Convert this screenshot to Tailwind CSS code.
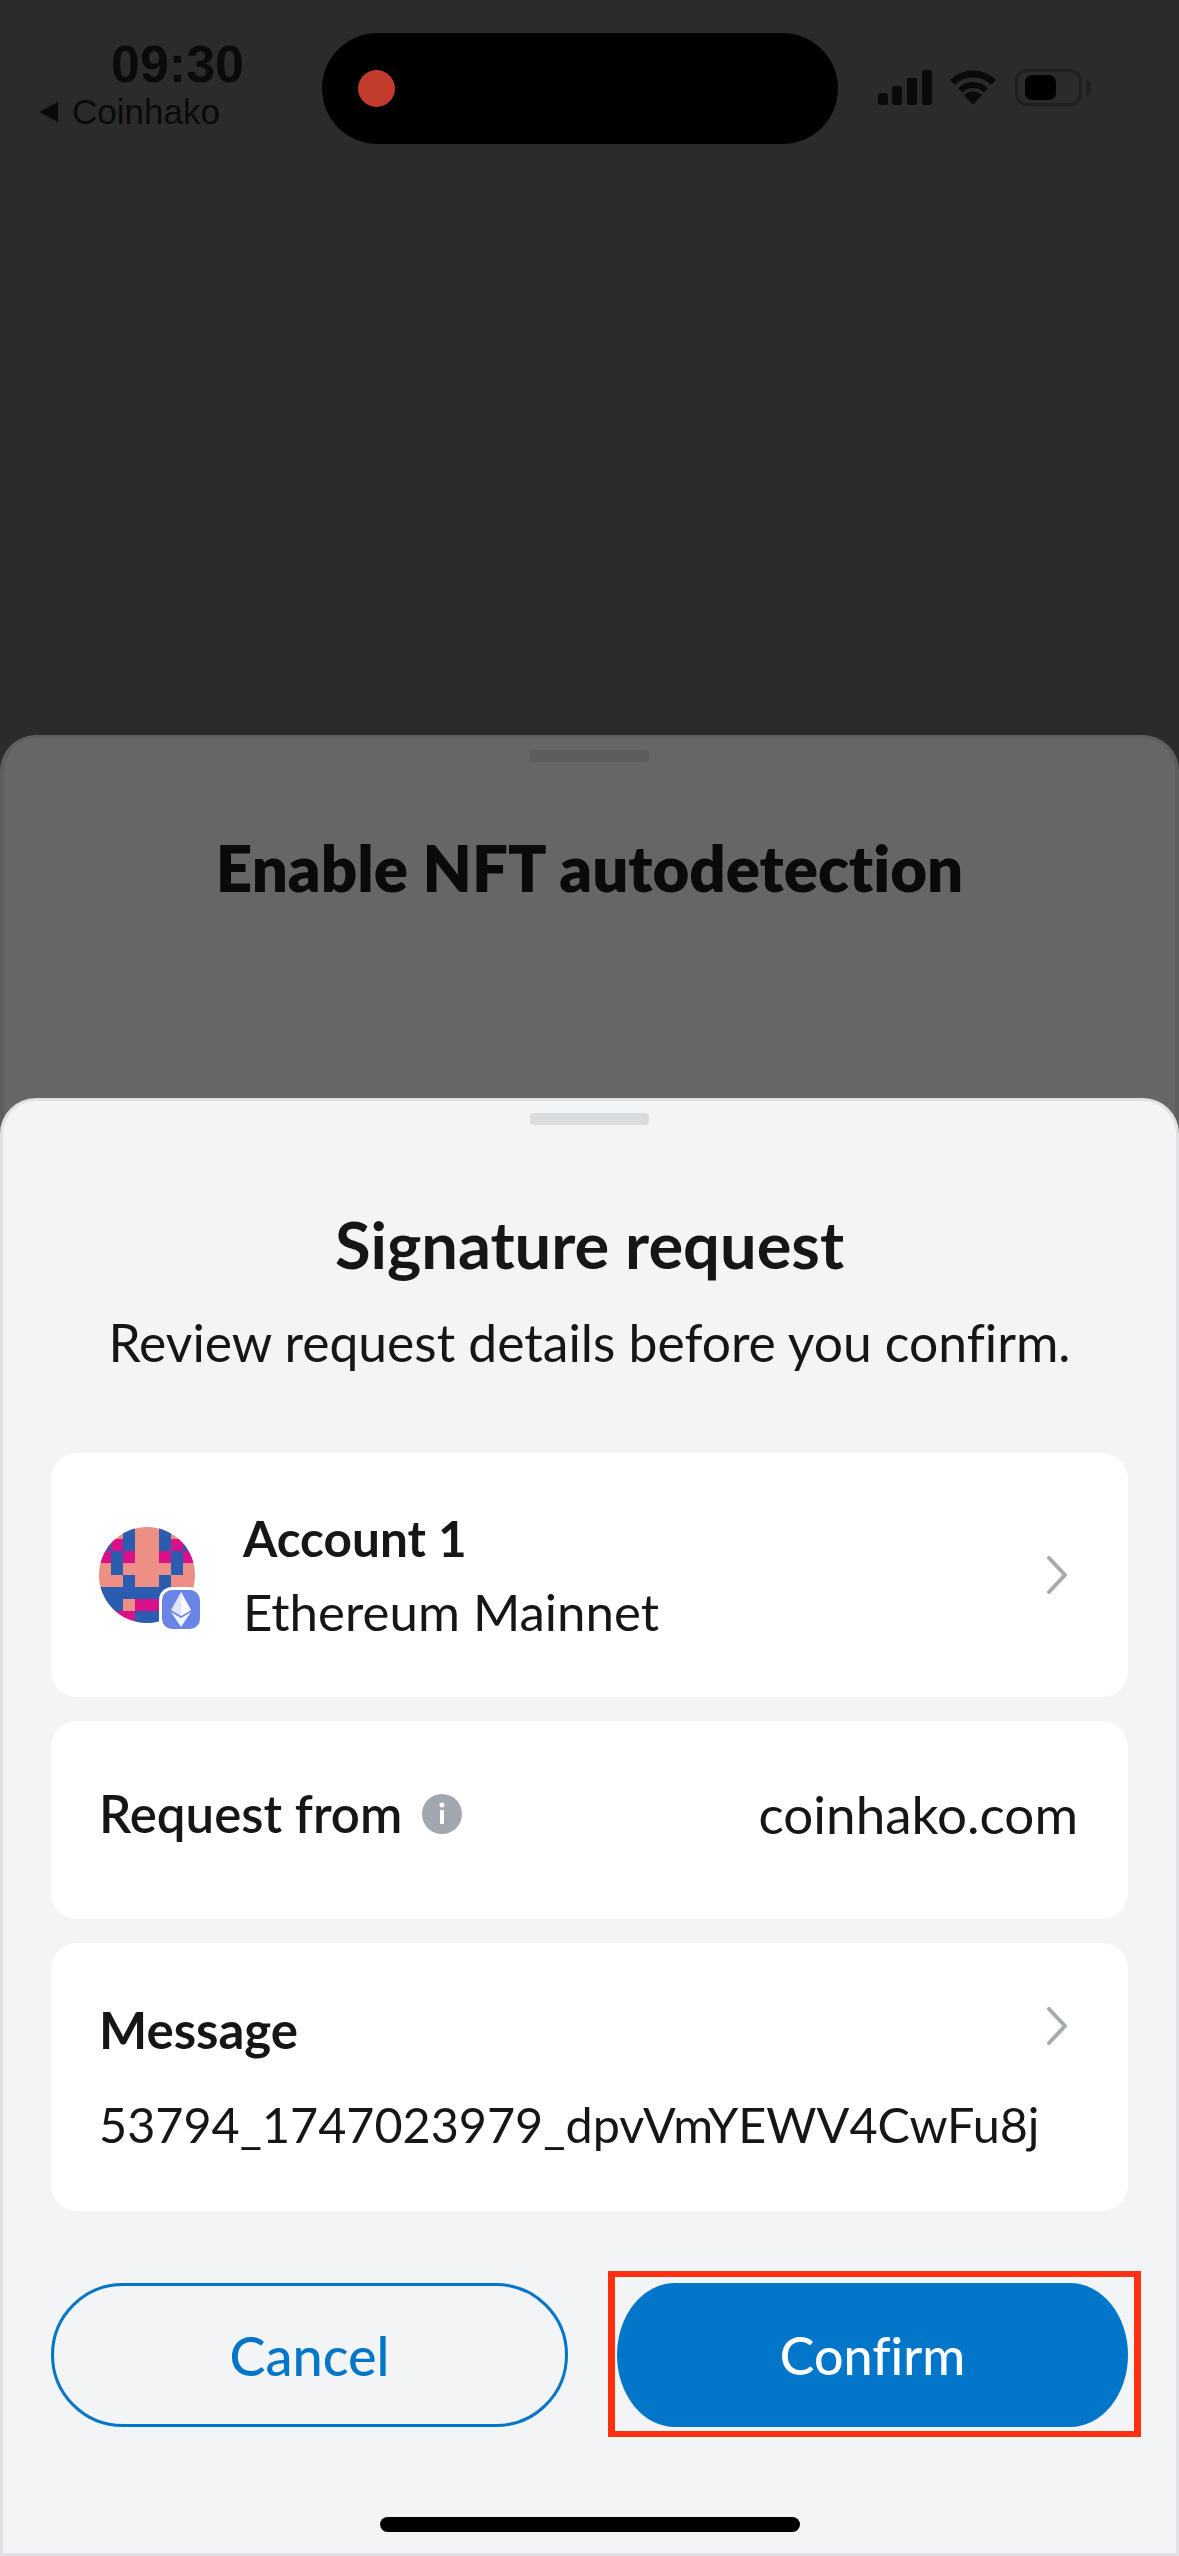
<!DOCTYPE html>
<html lang="en">
<head>
  <meta charset="UTF-8">
  <meta name="viewport" content="width=device-width, initial-scale=1.0">
  <title>Signature request</title>
  <script src="https://cdn.jsdelivr.net/npm/@tailwindcss/browser@4"></script>
</head>
<body class="bg-[#2b2b2b]">
  <div class="relative w-[1179px] h-[2556px] overflow-hidden bg-[#2b2b2b] font-['Lato',sans-serif] [font-variant-ligatures:none] text-[#141618]">

    <!-- status bar -->
    <div class="flex items-start h-[735px] pt-[33px] pl-[39px]">
      <div class="w-[283px] shrink-0 flex flex-col text-[#0a0a0a] font-['Liberation_Sans',sans-serif]">
        <span class="ml-[72px] mt-[6px] h-[50px] text-[52px] leading-[50px] font-bold">09:30</span>
        <div class="flex items-center gap-[14px] mt-[4px]">
          <svg width="19" height="20" viewBox="0 0 19 20"><path d="M19 0V20L0 10Z" fill="#0a0a0a"/></svg>
          <span class="text-[35px] leading-[38px]">Coinhako</span>
        </div>
      </div>
      <div class="flex items-center w-[516px] h-[111px] shrink-0 rounded-full bg-black pl-[36px]">
        <span class="w-[37px] h-[37px] rounded-full bg-[#c23b2c]"></span>
      </div>
      <div class="flex items-center ml-[40px] mt-[36px]">
        <svg width="54" height="35" viewBox="0 0 54 35" fill="#0a0a0a">
          <rect x="0" y="23" width="10" height="12" rx="3"/>
          <rect x="14" y="16" width="10" height="19" rx="3"/>
          <rect x="29" y="8" width="10" height="27" rx="3"/>
          <rect x="44" y="0" width="10" height="35" rx="3"/>
        </svg>
        <svg class="ml-[17px]" width="48" height="35" viewBox="0 0 48 35" fill="none" stroke="#0a0a0a">
          <path d="M3.5 12.5A29 29 0 0 1 44.5 12.5" stroke-width="7"/>
          <path d="M11.3 20.3A18 18 0 0 1 36.7 20.3" stroke-width="6"/>
          <path d="M24 35L15 25A13 13 0 0 1 33 25Z" fill="#0a0a0a" stroke="none"/>
        </svg>
        <div class="flex items-center ml-[18px]">
          <div class="flex items-center w-[67px] h-[37px] rounded-[12px] border-[3px] border-[#202020] pl-[7px]">
            <span class="w-[31px] h-[25px] rounded-[7px] bg-black"></span>
          </div>
          <span class="ml-[4px] w-[5px] h-[16px] rounded-r-full bg-[#202020]"></span>
        </div>
      </div>
    </div>

    <!-- sheet behind -->
    <div class="h-[1821px] rounded-t-[36px] border-x-[4px] border-t-[3px] border-[#5e5e5e] bg-[#666666] flex flex-col items-center">
      <span class="mt-[12px] w-[119px] h-[12px] rounded-[4px] bg-[#5b5c5e]"></span>
      <h2 class="mt-[66px] text-[#0a0a0a] text-[63.5px] leading-[80px] font-extrabold">Enable NFT autodetection</h2>
    </div>

    <!-- signature request sheet -->
    <div class="absolute left-0 right-0 top-[1098px] bottom-0 rounded-t-[36px] border-[3px] border-[#dfe1e4] bg-[#f2f4f6] flex flex-col items-center px-[48px]">
      <span class="mt-[12px] w-[119px] h-[12px] rounded-[4px] bg-[#d9dde0]"></span>
      <h1 class="mt-[83px] text-[65px] leading-[72px] font-bold">Signature request</h1>
      <p class="mt-[32px] text-[51.6px] leading-[60px]">Review request details before you confirm.</p>

      <div class="mt-[81px] w-full flex flex-col gap-[24px]">
        <div class="flex items-center h-[244px] rounded-[26px] bg-white pl-[48px] pr-[60px]">
          <div class="relative w-[96px] h-[96px] shrink-0">
            <svg width="96" height="96" viewBox="0 0 8 8" shape-rendering="crispEdges" class="rounded-full">
              <rect width="8" height="8" fill="#ee8f86"/>
              <g fill="#2a5cb0">
                <rect x="2" y="0" width="1" height="2"/><rect x="5" y="0" width="1" height="2"/>
                <rect x="0" y="1" width="1" height="1"/><rect x="7" y="1" width="1" height="1"/>
                <rect x="1" y="2" width="1" height="2"/><rect x="6" y="2" width="1" height="2"/>
                <rect x="2" y="4" width="1" height="1"/><rect x="5" y="4" width="1" height="1"/>
                <rect x="0" y="5" width="8" height="1"/>
                <rect x="0" y="6" width="2" height="1"/><rect x="6" y="6" width="2" height="1"/>
                <rect x="0" y="7" width="1" height="1"/><rect x="3" y="7" width="2" height="1"/>
              </g>
              <g fill="#d9108a">
                <rect x="1" y="1" width="1" height="1"/><rect x="6" y="1" width="1" height="1"/>
                <rect x="0" y="2" width="1" height="1"/><rect x="2" y="2" width="1" height="1"/>
                <rect x="5" y="2" width="1" height="1"/><rect x="7" y="2" width="1" height="1"/>
                <rect x="3" y="6" width="2" height="1"/>
                <rect x="1" y="7" width="2" height="1"/>
              </g>
            </svg>
            <div class="absolute left-[60px] top-[60px] w-[44px] h-[45px] rounded-[13px] bg-white p-[3px]">
              <div class="flex items-center justify-center w-full h-full rounded-[10px] bg-[#6a84e6]">
                <svg width="20" height="35" viewBox="0 0 20 35">
                  <path d="M10 0L0 18L10 24L20 18Z" fill="#dfe5fa"/>
                  <path d="M10 0V24L20 18Z" fill="#fff" opacity=".75"/>
                  <path d="M0 20L10 35L20 20L10 26Z" fill="#f2f4fd"/>
                </svg>
              </div>
            </div>
          </div>
          <div class="ml-[48px] flex-1 flex flex-col">
            <span class="text-[49.5px] leading-[60px] font-bold">Account 1</span>
            <span class="mt-[14px] text-[51px] leading-[60px]">Ethereum Mainnet</span>
          </div>
          <svg width="22" height="38" viewBox="0 0 22 38" fill="none" stroke="#a5abb2" stroke-width="4" stroke-linecap="round" stroke-linejoin="round"><path d="M3 2L19 19L3 36"/></svg>
        </div>

        <div class="flex items-start justify-between h-[198px] rounded-[26px] bg-white pl-[48px] pr-[50px] pt-[63px]">
          <div class="flex items-center gap-[20px]">
            <span class="text-[51px] leading-[60px] font-semibold">Request from</span>
            <svg width="40" height="40" viewBox="0 0 40 40"><circle cx="20" cy="20" r="20" fill="#a1a7af"/><rect x="18" y="16" width="4" height="14" rx="1" fill="#fff"/><circle cx="20" cy="11" r="2.5" fill="#fff"/></svg>
          </div>
          <span class="text-[53px] leading-[60px]">coinhako.com</span>
        </div>

        <div class="flex flex-col h-[268px] rounded-[26px] bg-white pl-[48px] pr-[50px] pt-[57px]">
          <div class="flex items-center justify-between">
            <span class="text-[51px] leading-[60px] font-bold">Message</span>
            <svg class="mr-[10px] -mt-[9px]" width="22" height="38" viewBox="0 0 22 38" fill="none" stroke="#a5abb2" stroke-width="4" stroke-linecap="round" stroke-linejoin="round"><path d="M3 2L19 19L3 36"/></svg>
          </div>
          <span class="mt-[34px] text-[48.5px] leading-[60px]">53794_1747023979_dpvVmYEWV4CwFu8j</span>
        </div>
      </div>

      <div class="relative mt-[72px] w-full flex gap-[49px]">
        <button class="flex items-center justify-center w-[517px] h-[144px] rounded-[72px] border-[3px] border-[#0376c9] text-[#0376c9] text-[54px] font-medium">Cancel</button>
        <button class="flex items-center justify-center w-[511px] h-[144px] rounded-[58px/72px] bg-[#0376c9] text-white text-[52px] font-medium">Confirm</button>
        <div class="absolute left-[557px] -right-[13px] -top-[12px] -bottom-[10px] border-x-[7px] border-y-[6px] border-[#ff3010]"></div>
      </div>

      <span class="mt-[90px] w-[420px] h-[15px] rounded-full bg-black"></span>
    </div>
  </div>
</body>
</html>
